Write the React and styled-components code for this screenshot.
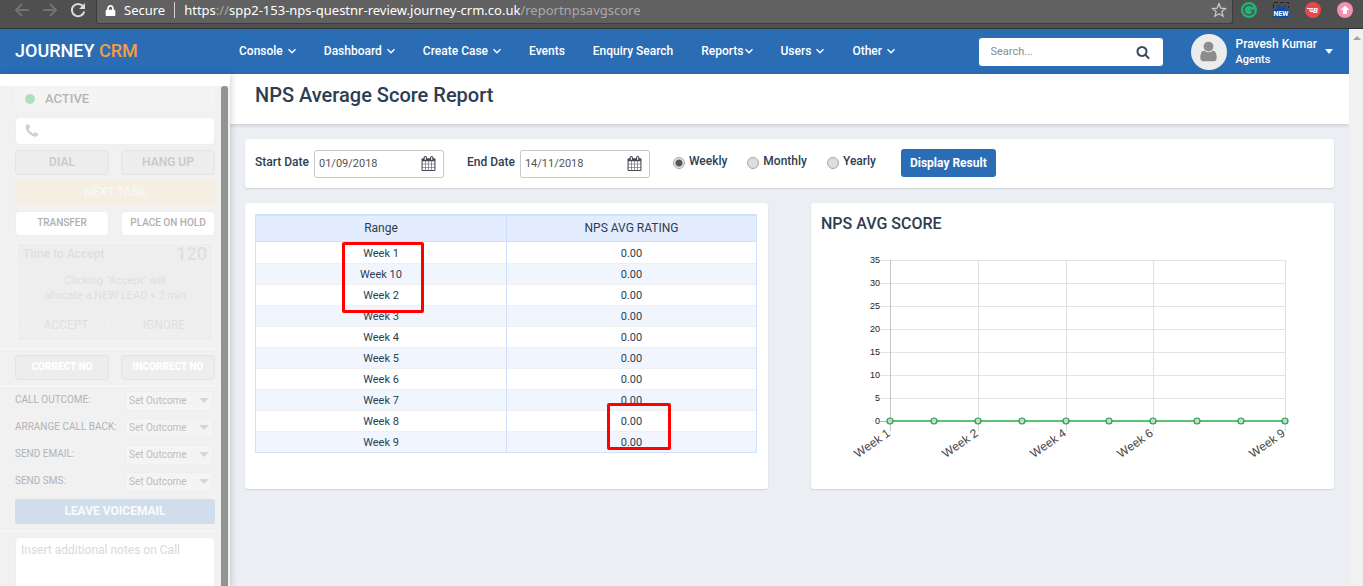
import { useState } from 'react';
import styled, { createGlobalStyle } from 'styled-components';
import { FaLock } from 'react-icons/fa';

const GlobalStyle = createGlobalStyle`
  * { box-sizing: border-box; }
  body {
    margin: 0;
    font-family: Roboto, 'Liberation Sans', sans-serif;
    font-size: 12px;
    color: #2c3e50;
  }
  button, input, select, textarea { font-family: inherit; }
  h1, h2 { margin: 0; }
`;

const Shell = styled.div`
  display: flex;
  flex-direction: column;
  height: 100vh;
  overflow: hidden;
`;

/* ---------- browser bar ---------- */

const BrowserBar = styled.div`
  display: flex;
  flex: none;
  height: 29px;
  background: #4f4f4f;
  border-bottom: 1px solid #303030;
`;

const BrowserNav = styled.div`
  display: flex;
  flex: 0 0 96px;
  align-items: flex-start;
  gap: 12px;
  padding: 2px 0 0 14px;
`;

const BrowserBtn = styled.button`
  display: flex;
  padding: 0;
  border: 0;
  background: none;
  color: ${p => p.$on ? '#dcdcdc' : '#727272'};
`;

const Address = styled.div`
  display: flex;
  flex: 1;
  align-items: center;
  height: 24px;
  padding: 0 5px 3px 8px;
  background: #616161;
  border: 1px solid #3c3c3c;
  border-top: 0;
  border-radius: 0 0 3px 3px;
  font-family: 'Noto Sans', 'Open Sans', sans-serif;
  font-size: 13px;
  line-height: 20px;
  color: #fff;
  white-space: nowrap;
`;

const Secure = styled.span`
  padding: 0 9px 0 8px;
  margin-right: 9px;
  border-right: 1px solid #d0d0d0;
  line-height: 16px;
`;

const Url = styled.span`
  flex: 1;
`;

const Dim = styled.span`
  color: #a9a9a9;
`;

const Extensions = styled.div`
  display: flex;
  align-items: flex-start;
  gap: 16px;
  padding: 2px 10px 0 8px;
`;

/* ---------- header ---------- */

const Frame = styled.div`
  display: flex;
  flex: 1;
  min-height: 0;
`;

const Site = styled.div`
  display: flex;
  flex: 1;
  flex-direction: column;
  min-width: 0;
`;

const Track = styled.div`
  display: flex;
  flex: 0 0 14px;
  justify-content: center;
  padding: 7px 0 0 2px;
  background: #f1f1f1;
`;

const Header = styled.header`
  display: flex;
  flex: none;
  align-items: center;
  height: 45px;
  padding: 0 16px 0 15px;
  background: #2a6db5;
  color: #fff;
`;

const Logo = styled.a`
  flex: 0 0 224px;
  padding-bottom: 2px;
  font-size: 18px;
  font-weight: 500;
  color: #fff;
  text-decoration: none;

  span { color: #f59e3d; }
`;

const Nav = styled.nav`
  display: flex;
  flex: 1;
  gap: 28px;
  padding-bottom: 2px;
`;

const NavLink = styled.a`
  display: flex;
  align-items: center;
  gap: ${p => p.$tight ? '1px' : '5px'};
  font-weight: 500;
  line-height: 16px;
  color: #fff;
  text-decoration: none;
  white-space: nowrap;
`;

const SearchBox = styled.label`
  display: flex;
  align-items: center;
  width: 184px;
  height: 28px;
  padding: 0 13px 0 12px;
  margin-right: 28px;
  background: #fff;
  border-radius: 3px;
  color: #3d4a5c;
`;

const SearchInput = styled.input`
  flex: 1;
  min-width: 0;
  padding: 0;
  border: 0;
  outline: 0;
  font-size: 11px;
  color: #555;

  &::placeholder { color: #8a8a8a; }
`;

const Avatar = styled.div`
  display: flex;
  align-items: center;
  justify-content: center;
  width: 36px;
  height: 36px;
  margin-right: 9px;
  background: #ececec;
  border-radius: 50%;
  color: #8c8c8c;
`;

const UserBtn = styled.button`
  display: flex;
  align-items: center;
  gap: 8px;
  padding: 0;
  border: 0;
  background: none;
  font-size: 12px;
  font-weight: 500;
  line-height: 15px;
  text-align: left;
  color: #fff;

  small { display: block; font-size: 11px; }
`;

/* ---------- sidebar ---------- */

const Body = styled.div`
  display: flex;
  flex: 1;
  min-height: 0;
`;

const SidebarWrap = styled.div`
  display: flex;
  z-index: 1;
  background: #fff;
  box-shadow: 2px 0 6px rgba(0, 0, 0, 0.14);
`;

const Sidebar = styled.aside`
  display: flex;
  flex: 0 0 230px;
  margin-top: 12px;
  overflow: hidden;
  background: #f1f1f1;
`;

const Panel = styled.div`
  flex: 1;
  min-width: 0;
`;

const Thumb = styled.div`
  flex: 0 0 7px;
  margin-right: 2px;
  background: #939391;
  border-radius: 3px 3px 0 0;
`;

const Group = styled.div`
  padding: ${p => p.$flush ? '0' : '5px'} 6px 0 15px;
  border-bottom: 2px solid #f5f5f5;
`;

const Status = styled.div`
  display: flex;
  align-items: center;
  gap: 10px;
  height: 25px;
  padding-left: 10px;
  margin-bottom: 6px;
  background: #f4f4f4;
  font-size: 13px;
  font-weight: 500;
  color: #b4b4b4;

  i {
    width: 10px;
    height: 10px;
    border-radius: 50%;
    background: #b0dfc0;
  }
`;

const PhoneBox = styled.label`
  display: flex;
  align-items: center;
  height: 28px;
  padding: 0 8px;
  margin-bottom: 5px;
  background: #fff;
  border: 1px solid #eeeeee;
  border-radius: 4px;
  color: #cfcfcf;

  input {
    flex: 1;
    min-width: 0;
    border: 0;
    outline: 0;
    background: none;
  }
`;

const Pair = styled.div`
  display: grid;
  grid-template-columns: 1fr 1fr;
  gap: 12px;
  margin-bottom: 5px;
`;

const GhostBtn = styled.button`
  height: 25px;
  padding: 0 0 2px;
  background: #ededed;
  border: 1px solid #e3e3e3;
  border-radius: 4px;
  font-size: ${p => p.$small ? '10px' : '12px'};
  font-weight: ${p => p.$small ? 900 : 500};
  color: ${p => p.$small ? '#fff' : '#c8c8c8'};
`;

const WideBtn = styled.button`
  display: block;
  width: 100%;
  height: 25px;
  padding: 0 0 2px;
  margin-bottom: 6px;
  border: 0;
  border-radius: 3px;
  background: ${p => p.$blue ? '#d0deeb' : '#f4eee3'};
  font-size: 12px;
  font-weight: ${p => p.$blue ? 700 : 500};
  color: ${p => p.$blue ? '#fbfbfb' : '#f8f8f6'};
`;

const WhiteBtn = styled.button`
  height: 25px;
  padding: 0 0 2px;
  background: #fff;
  border: 1px solid #eeeeee;
  border-radius: 4px;
  font-size: 10px;
  font-weight: 500;
  color: #b0b0b0;
`;

const Offer = styled.div`
  padding: 0 5px;
  margin: 6px 1px;
  background: #eeeeee;
  border: 2px solid #f3f3f3;
  color: #dfdfdf;
`;

const OfferTop = styled.div`
  display: flex;
  align-items: center;
  justify-content: space-between;
  font-weight: 500;
  line-height: 20px;

  b { font-size: 18px; font-weight: 500; }
`;

const OfferText = styled.p`
  padding: 8px 0 4px;
  margin: 0 0 6px;
  border: 1px solid #f0f0f0;
  font-size: 11px;
  line-height: 15px;
  text-align: center;
`;

const OfferBtn = styled.button`
  height: 21px;
  padding: 0;
  background: #efefef;
  border: 1px solid #f1f1f1;
  border-radius: 3px;
  font-size: 12px;
  color: #dfdfdf;
`;

const Outcomes = styled.div`
  padding-bottom: 4px;
`;

const Outcome = styled.div`
  display: flex;
  align-items: center;
  justify-content: space-between;
  height: 27px;
  padding-right: 2px;
  font-size: 10px;
  white-space: nowrap;
  color: #b3b3b3;

  label { padding-bottom: 3px; }
`;

const SelectWrap = styled.div`
  display: flex;
  align-items: center;
  position: relative;
  width: 88px;
  color: #d5d5d5;

  svg { position: absolute; right: 4px; pointer-events: none; }
`;

const Select = styled.select`
  width: 100%;
  height: 20px;
  padding: 0 4px 0 3px;
  appearance: none;
  background: #f4f4f4;
  border: 1px solid #eeeeee;
  border-radius: 3px;
  font-size: 10px;
  color: #bdbdbd;
`;

const Notes = styled.textarea`
  display: block;
  width: 100%;
  height: 80px;
  padding: 5px;
  resize: none;
  background: #fff;
  border: 1px solid #eeeeee;
  border-radius: 4px;
  font-size: 12px;

  &::placeholder { color: #d9d9d9; }
`;

/* ---------- main ---------- */

const Main = styled.main`
  flex: 1;
  min-width: 0;
  background: #ebeff4;
`;

const TitleBar = styled.div`
  height: 50px;
  padding: 9px 25px;
  background: #fff;
  box-shadow: 0 1px 4px rgba(0, 0, 0, 0.18);

  h1 { font-size: 20px; font-weight: 500; line-height: 24px; }
`;

const Content = styled.div`
  display: grid;
  grid-template-columns: 1fr 1fr;
  gap: 15px 43px;
  padding: 15px;
`;

const Card = styled.section`
  padding: 10px;
  background: #fff;
  border-radius: 3px;
  box-shadow: 0 1px 2px rgba(0, 0, 0, 0.12);

  h2 { font-size: 16px; font-weight: 500; line-height: 22px; }
`;

const Filters = styled.form`
  display: flex;
  grid-column: 1 / -1;
  align-items: center;
  height: 49px;
  padding: 0 10px;
  background: #fff;
  border-radius: 3px;
  box-shadow: 0 1px 2px rgba(0, 0, 0, 0.12);
`;

const Field = styled.div`
  display: flex;
  align-items: center;
  gap: 5px;
  margin-right: 23px;
  font-weight: 500;

  label { padding-bottom: 4px; }
`;

const DateBox = styled.div`
  display: flex;
  align-items: center;
  width: 130px;
  height: 28px;
  padding: 0 7px 0 4px;
  border: 1px solid #c8c8c8;
  border-radius: 3px;
  color: #4c4458;

  input {
    flex: 1;
    min-width: 0;
    padding: 0;
    border: 0;
    outline: 0;
    font-size: 11px;
    color: #555;
  }
`;

const Choice = styled.label`
  display: flex;
  align-items: center;
  gap: 4px;
  margin-right: ${p => p.$last ? '25px' : '20px'};
  font-weight: 500;
  padding-bottom: 6px;

  input {
    width: 12px;
    height: 12px;
    margin: 5px 0 0;
    appearance: none;
    background: #dedede;
    border: 1px solid #a5a5a5;
    border-radius: 50%;
  }

  input:checked {
    background: radial-gradient(circle, #555 0 3px, #e4e4e4 4px);
  }
`;

const Submit = styled.button`
  height: 28px;
  padding: 0 9px;
  margin-bottom: 2px;
  background: #2a6db5;
  border: 0;
  border-radius: 3px;
  font-size: 12px;
  font-weight: 700;
  color: #fff;
`;

const TableWrap = styled.div`
  position: relative;
  margin: 1px 1px 26px 0;
`;

const Table = styled.table`
  width: 100%;
  table-layout: fixed;
  border-collapse: separate;
  border-spacing: 0;
  border: 1px solid #cfe0fc;
  border-width: 2px 1px 1px;
  text-align: center;

  th {
    height: 26px;
    padding: 0 0 2px;
    background: #e3edff;
    border-bottom: 1px solid #cfe0fc;
    font-size: 12px;
    font-weight: 400;
  }

  td {
    height: 21px;
    padding: 2px 0 0;
    border-top: 1px solid #f0f0f0;
    font-size: 11px;
    line-height: 18px;
  }

  tr:first-child td { border-top-color: #fff; }
  tr:nth-child(even) td { background: #f1f6fe; }
  th + th, td + td { border-left: 1px solid #cfe0fc; }
`;

// red outline drawn over the rows it points at
const Marker = styled.div`
  position: absolute;
  left: ${p => p.$x}px;
  top: ${p => p.$y}px;
  width: ${p => p.$w}px;
  height: ${p => p.$h}px;
  border: 3px solid #fe0000;
  border-radius: 2px;
  pointer-events: none;
`;

const ChartSvg = styled.svg`
  display: block;
  width: 100%;
  height: auto;
`;

/* ---------- icons ---------- */

const FA = {
  search: 'M1216 832q0-185-131.5-316.5t-316.5-131.5-316.5 131.5-131.5 316.5 131.5 316.5 316.5 131.5 316.5-131.5 131.5-316.5zm512 832q0 52-38 90t-90 38q-54 0-90-38l-343-342q-179 124-399 124-143 0-273.5-55.5t-225-150-150-225-55.5-273.5 55.5-273.5 150-225 225-150 273.5-55.5 273.5 55.5 225 150 150 225 55.5 273.5q0 220-124 399l343 343q37 37 37 90z',
  user: 'M1536 1399q0 109-62.5 187t-150.5 78h-854q-88 0-150.5-78t-62.5-187q0-85 8.5-160.5t31.5-152 58.5-131 94-89 134.5-34.5q131 128 313 128t313-128q76 0 134.5 34.5t94 89 58.5 131 31.5 152 8.5 160.5zm-256-887q0 159-112.5 271.5t-271.5 112.5-271.5-112.5-112.5-271.5 112.5-271.5 271.5-112.5 271.5 112.5 112.5 271.5z',
  phone: 'M1600 1240q0 27-10 70.5t-21 68.5q-21 50-122 106-94 51-186 51-27 0-52.5-3.5t-57.5-12.5-47.5-14.5-55.5-20.5-49-18q-98-35-175-83-128-79-264.5-215.5t-215.5-264.5q-48-77-83-175-3-9-18-49t-20.5-55.5-14.5-47.5-12.5-57.5-3.5-52.5q0-92 51-186 56-101 106-122 25-11 68.5-21t70.5-10q14 0 21 3 18 6 53 76 11 19 30 54t35 63.5 31 53.5q3 4 17.5 25t21.5 35.5 7 28.5q0 20-28.5 50t-62 55-62 53-28.5 46q0 9 5 22.5t8.5 20.5 14 24 11.5 19q76 137 174 235t235 174q2 1 19 11.5t24 14 20.5 8.5 22.5 5q18 0 46-28.5t53-62 55-62 50-28.5q14 0 28.5 7t35.5 21.5 25 17.5q25 15 53.5 31t63.5 35 54 30q70 35 76 53 3 7 3 21z',
  calendar: 'M192 1664h288v-288h-288v288zm352 0h320v-288h-320v288zm-352-352h288v-320h-288v320zm352 0h320v-320h-320v320zm-352-384h288v-288h-288v288zm736 736h320v-288h-320v288zm-384-736h320v-288h-320v288zm768 736h288v-288h-288v288zm-384-352h320v-320h-320v320zm-352-864v-288q0-13-9.5-22.5t-22.5-9.5h-64q-13 0-22.5 9.5t-9.5 22.5v288q0 13 9.5 22.5t22.5 9.5h64q13 0 22.5-9.5t9.5-22.5zm736 864h288v-320h-288v320zm-384-384h320v-288h-320v288zm384 0h288v-288h-288v288zm32-480v-288q0-13-9.5-22.5t-22.5-9.5h-64q-13 0-22.5 9.5t-9.5 22.5v288q0 13 9.5 22.5t22.5 9.5h64q13 0 22.5-9.5t9.5-22.5zm384-64v1280q0 52-38 90t-90 38h-1408q-52 0-90-38t-38-90v-1280q0-52 38-90t90-38h128v-96q0-66 47-113t113-47h64q66 0 113 47t47 113v96h384v-96q0-66 47-113t113-47h64q66 0 113 47t47 113v96h128q52 0 90 38t38 90z',
};

const Icon = ({ name, size }) => (
  <svg width={size} height={size} viewBox="0 0 1792 1792" fill="currentColor" aria-hidden="true">
    <path d={FA[name]} />
  </svg>
);

const Chevron = () => (
  <svg width="8" height="6" viewBox="0 0 8 6" fill="none" stroke="currentColor" strokeWidth="1.4" aria-hidden="true">
    <path d="M0.5 1.2 4 4.7 7.5 1.2" />
  </svg>
);

const Caret = ({ w = 8, h = 5 }) => (
  <svg width={w} height={h} viewBox="0 0 10 5" preserveAspectRatio="none" fill="currentColor" aria-hidden="true">
    <path d="M0 0h10L5 5z" />
  </svg>
);

const Arrow = ({ right }) => (
  <svg width="16" height="16" viewBox="0 0 16 16" fill="none" stroke="currentColor" strokeWidth="2" aria-hidden="true">
    <path d={right ? 'M1 8h13M8 2l6 6-6 6' : 'M15 8H2M8 2 2 8l6 6'} />
  </svg>
);

const Reload = () => (
  <svg width="16" height="16" viewBox="0 0 16 16" fill="none" stroke="currentColor" strokeWidth="2" aria-hidden="true">
    <path d="M13 4.2A6.2 6.2 0 1 0 14.2 9.5" />
    <path d="M15 1v6H9z" fill="currentColor" stroke="none" />
  </svg>
);

const Star = () => (
  <svg width="16" height="16" viewBox="0 0 16 16" fill="none" stroke="#c9c9c9" strokeWidth="1.3" aria-hidden="true">
    <path d="m8 1.8 1.8 4.3 4.7.4-3.6 3.1 1.1 4.6-4-2.5-4 2.5 1.1-4.6-3.6-3.1 4.7-.4z" />
  </svg>
);

/* ---------- data ---------- */

const menu = [
  { label: 'Console', drop: true },
  { label: 'Dashboard', drop: true },
  { label: 'Create Case', drop: true },
  { label: 'Events' },
  { label: 'Enquiry Search' },
  { label: 'Reports', drop: true, tight: true },
  { label: 'Users', drop: true },
  { label: 'Other', drop: true },
];

const outcomes = ['CALL OUTCOME:', 'ARRANGE CALL BACK:', 'SEND EMAIL:', 'SEND SMS:'];
const periods = ['Weekly', 'Monthly', 'Yearly'];

const ratings = [1, 10, 2, 3, 4, 5, 6, 7, 8, 9].map(n => ({ range: `Week ${n}`, rating: 0 }));

/* ---------- sections ---------- */

const Browser = () => (
  <BrowserBar>
    <BrowserNav>
      <BrowserBtn aria-label="Back"><Arrow /></BrowserBtn>
      <BrowserBtn aria-label="Forward"><Arrow right /></BrowserBtn>
      <BrowserBtn aria-label="Reload" $on><Reload /></BrowserBtn>
    </BrowserNav>
    <Address>
      <FaLock size={11} />
      <Secure>Secure</Secure>
      <Url>
        https<Dim>://</Dim>spp2-153-nps-questnr-review.journey-crm.co.uk<Dim>/reportnpsavgscore</Dim>
      </Url>
      <Star />
    </Address>
    <Extensions>
      <svg width="16" height="16" viewBox="0 0 16 16" aria-hidden="true">
        <circle cx="8" cy="8" r="8" fill="#1fb573" />
        <path d="M11.8 4.8A5 5 0 1 0 12.9 8.5H9.5M12.5 8.5V12" fill="none" stroke="#4f4f4f" strokeWidth="1.5" />
      </svg>
      <svg width="16" height="16" viewBox="0 0 16 16" aria-hidden="true">
        <path d="M.5 6V.5h15V6" fill="none" stroke="#222" strokeDasharray="4 2" />
        <path d="M4 7V3h3l3 3V3h3v4z" fill="#0b4ea2" />
        <path d="M0 7h16v9H0z" fill="#0b4ea2" />
        <text x="8" y="14" textAnchor="middle" fontSize="7" fontWeight="700" fill="#fff">NEW</text>
      </svg>
      <svg width="16" height="16" viewBox="0 0 16 16" aria-hidden="true">
        <circle cx="8" cy="8" r="8" fill="#e5484d" />
        <path d="M2 6.5h6M4 8h4M5 9.5h3" stroke="#fff" strokeWidth="1.2" />
        <text x="8" y="11" fontSize="8" fontWeight="700" fontStyle="italic" fill="#fff">B</text>
      </svg>
      <svg width="16" height="16" viewBox="0 0 16 16" aria-hidden="true">
        <circle cx="8" cy="8" r="8" fill="#f48fb5" />
        <path d="M8 3.5 12.5 8H10v4H6V8H3.5z" fill="#fff" />
      </svg>
    </Extensions>
  </BrowserBar>
);

const TopBar = () => (
  <Header>
    <Logo href="#">JOURNEY <span>CRM</span></Logo>
    <Nav>
      {menu.map(m => (
        <NavLink key={m.label} href="#" $tight={m.tight}>
          {m.label}
          {m.drop && <Chevron />}
        </NavLink>
      ))}
    </Nav>
    <SearchBox>
      <SearchInput type="text" placeholder="Search..." aria-label="Search" />
      <Icon name="search" size={14} />
    </SearchBox>
    <Avatar><Icon name="user" size={23} /></Avatar>
    <UserBtn>
      <span>Pravesh Kumar<small>Agents</small></span>
      <Caret />
    </UserBtn>
  </Header>
);

const CallPanel = () => (
  <SidebarWrap>
    <Sidebar>
      <Panel>
        <Group $flush>
          <Status><i />ACTIVE</Status>
          <PhoneBox>
            <Icon name="phone" size={16} />
            <input type="text" aria-label="Phone number" />
          </PhoneBox>
          <Pair>
            <GhostBtn>DIAL</GhostBtn>
            <GhostBtn>HANG UP</GhostBtn>
          </Pair>
          <WideBtn>NEXT TASK</WideBtn>
          <Pair>
            <WhiteBtn>TRANSFER</WhiteBtn>
            <WhiteBtn>PLACE ON HOLD</WhiteBtn>
          </Pair>
          <Offer>
            <OfferTop>Time to Accept <b>120</b></OfferTop>
            <OfferText>
              Clicking "Accept" will<br />allocate a NEW LEAD &lt; 2 min
            </OfferText>
            <Pair>
              <OfferBtn>ACCEPT</OfferBtn>
              <OfferBtn>IGNORE</OfferBtn>
            </Pair>
          </Offer>
        </Group>
        <Group>
          <Pair>
            <GhostBtn $small>CORRECT NO</GhostBtn>
            <GhostBtn $small>INCORRECT NO</GhostBtn>
          </Pair>
        </Group>
        <Group $flush>
          <Outcomes>
            {outcomes.map((label, i) => (
              <Outcome key={label}>
                <label htmlFor={`outcome-${i}`}>{label}</label>
                <SelectWrap>
                  <Select id={`outcome-${i}`}>
                    <option>Set Outcome</option>
                  </Select>
                  <Caret w={10} h={5} />
                </SelectWrap>
              </Outcome>
            ))}
          </Outcomes>
          <WideBtn $blue>LEAVE VOICEMAIL</WideBtn>
        </Group>
        <Group>
          <Notes placeholder="Insert additional notes on Call" aria-label="Call notes" />
        </Group>
      </Panel>
      <Thumb />
    </Sidebar>
  </SidebarWrap>
);

const DateField = ({ id, label, value }) => (
  <Field>
    <label htmlFor={id}>{label}</label>
    <DateBox>
      <input id={id} type="text" defaultValue={value} />
      <Icon name="calendar" size={15} />
    </DateBox>
  </Field>
);

const FilterBar = () => {
  const [period, setPeriod] = useState('Weekly');

  return (
    <Filters onSubmit={e => e.preventDefault()}>
      <DateField id="start" label="Start Date" value="01/09/2018" />
      <DateField id="end" label="End Date" value="14/11/2018" />
      {periods.map((p, i) => (
        <Choice key={p} $last={i === periods.length - 1}>
          <input type="radio" name="period" checked={period === p} onChange={() => setPeriod(p)} />
          {p}
        </Choice>
      ))}
      <Submit type="submit">Display Result</Submit>
    </Filters>
  );
};

const LEFT = 69;
const RIGHT = 464;
const BASE = 186;
const ROW = 23;

const Chart = () => {
  const step = (RIGHT - LEFT) / (ratings.length - 1);
  const x = i => Math.round(LEFT + i * step);
  const labelled = [0, 2, 4, 6, 9];

  return (
    <ChartSvg viewBox="0 0 503 244" role="img" aria-label="NPS average score by week">
      {[0, 5, 10, 15, 20, 25, 30, 35].map(v => {
        const y = BASE - (v / 5) * ROW;
        return (
          <g key={v}>
            <path d={`M${LEFT - 10} ${y + 0.5}H${RIGHT}`} stroke={v ? '#e3e3e3' : '#b5b5b5'} />
            <text x={LEFT - 10} y={y + 3} textAnchor="end" fontSize="9" fontFamily="Liberation Sans" fill="#222">{v}</text>
          </g>
        );
      })}
      {labelled.map(i => (
        <g key={i}>
          <path d={`M${x(i) + 0.5} ${BASE - 7 * ROW}V${BASE + 10}`} stroke={i ? '#e0e0e0' : '#c4c4c4'} />
          <text
            transform={`translate(${x(i) + 1} ${BASE + 14}) rotate(-35)`}
            textAnchor="end"
            fontSize="12"
            fontFamily="Liberation Sans"
            fill="#444"
          >
            {ratings[i].range}
          </text>
        </g>
      ))}
      <path d={`M${LEFT} ${BASE}H${RIGHT}`} stroke="#5cbf7a" strokeWidth="2" />
      {ratings.map((r, i) => (
        <circle key={r.range} cx={x(i)} cy={BASE} r="3" fill="#c9d6cc" stroke="#22a64b" strokeWidth="1.2" />
      ))}
    </ChartSvg>
  );
};

const Report = () => (
  <Main>
    <TitleBar><h1>NPS Average Score Report</h1></TitleBar>
    <Content>
      <FilterBar />
      <Card>
        <TableWrap>
          <Table>
            <thead>
              <tr><th>Range</th><th>NPS AVG RATING</th></tr>
            </thead>
            <tbody>
              {ratings.map(r => (
                <tr key={r.range}><td>{r.range}</td><td>{r.rating.toFixed(2)}</td></tr>
              ))}
            </tbody>
          </Table>
          <Marker $x={87} $y={28} $w={82} $h={71} />
          <Marker $x={352} $y={189} $w={64} $h={47} />
        </TableWrap>
      </Card>
      <Card>
        <h2>NPS AVG SCORE</h2>
        <Chart />
      </Card>
    </Content>
  </Main>
);

const App = () => (
  <>
    <GlobalStyle />
    <Shell>
      <Browser />
      <Frame>
        <Site>
          <TopBar />
          <Body>
            <CallPanel />
            <Report />
          </Body>
        </Site>
        <Track>
          <svg width="8" height="4" viewBox="0 0 8 4" fill="#a3a3a3" aria-hidden="true"><path d="M0 4 4 0l4 4z" /></svg>
        </Track>
      </Frame>
    </Shell>
  </>
);

export default App;
